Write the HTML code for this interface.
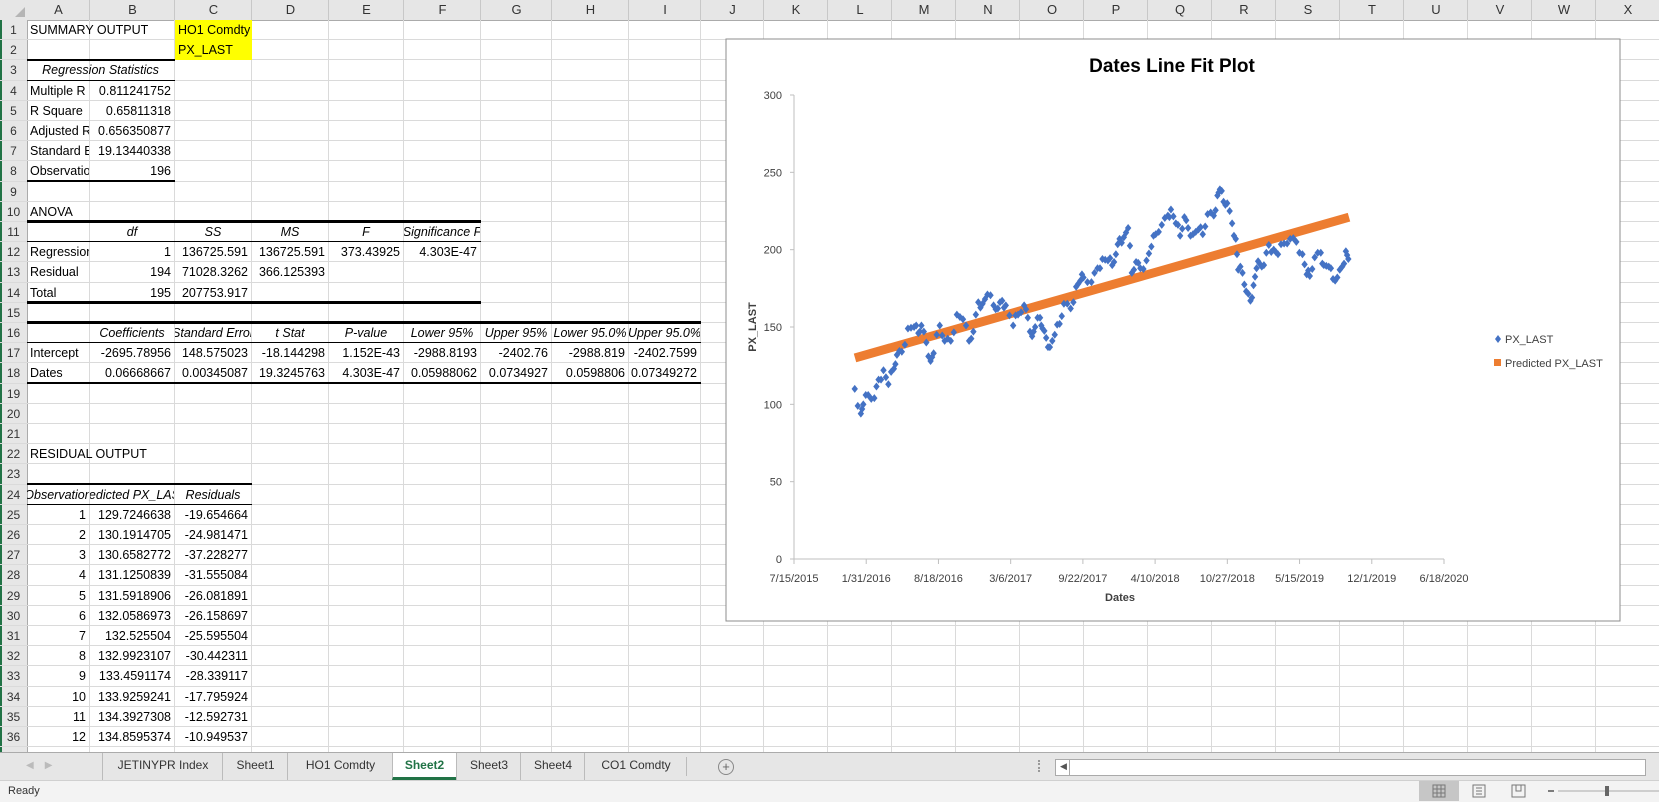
<!DOCTYPE html>
<html><head><meta charset="utf-8"><style>
body{margin:0;width:1659px;height:801px;overflow:hidden;background:#fff;font-family:"Liberation Sans",sans-serif;position:relative}
.a{position:absolute}
.t{position:absolute;font-size:12.5px;line-height:20px;white-space:nowrap;color:#000;overflow:hidden}
.c{display:flex;justify-content:center}
.h{position:absolute;font-size:13px;color:#333;text-align:center;line-height:20px}
</style></head><body>
<div id="g"></div>
<svg class="a" style="left:0;top:0" width="1659" height="801" id="ch"></svg>
<div class="a" style="left:0;top:752px;width:1659px;height:28px;background:#e6e6e6;border-top:1px solid #ababab"></div>
<div class="a" style="left:0;top:780px;width:1659px;height:21px;background:#f3f3f3;border-top:1px solid #d0d0d0"></div>
<div class="t" style="left:8px;top:781px;font-size:11px;color:#333">Ready</div>
<div class="a" style="left:26px;top:760px;font-size:10px;color:#bbb">&#9664;&nbsp;&nbsp;&nbsp;&nbsp;&#9654;</div>
<div id="tabs"></div>
<div class="a" style="left:718px;top:759px;width:14px;height:14px;border:1px solid #888;border-radius:50%;font-size:13px;line-height:14px;text-align:center;color:#666">+</div>
<div class="a" style="left:1038px;top:760px;width:2px;height:12px;border-left:2px dotted #999"></div>
<div class="a" style="left:1055px;top:759px;width:589px;height:15px;background:#fff;border:1px solid #aaa"></div>
<div class="a" style="left:1069px;top:760px;width:1px;height:15px;background:#aaa"></div>
<div class="a" style="left:1060px;top:761px;font-size:9px;color:#555">&#9664;</div>
<div class="a" style="left:1419px;top:781px;width:40px;height:20px;background:#c6c6c6"></div>
<svg class="a" style="left:1419px;top:781px" width="240" height="20">
<g fill="none" stroke="#777" stroke-width="1"><rect x="14" y="4" width="12" height="12"/><path d="M18 4V16M22 4V16M14 8H26M14 12H26"/>
<rect x="54" y="4" width="12" height="12"/><path d="M57 7h6M57 10h6M57 13h6"/>
<rect x="93" y="4" width="13" height="12"/><path d="M97 4v6h5V4"/></g>
<path d="M129 10h6" stroke="#555" stroke-width="1.5"/><path d="M139 10h101" stroke="#aaa"/><rect x="186" y="5" width="4" height="10" fill="#666"/>
</svg>
<script>
const cols=[0,27,90,175,252,329,404,481,552,629,701,764,828,892,956,1020,1084,1148,1212,1276,1340,1404,1468,1532,1596,1660];
const L="ABCDEFGHIJKLMNOPQRSTUVWX";
const rt=i=>20+(i-1)*20.2;
let h='';
h+=`<div class="a" style="left:0;top:0;width:1659px;height:20px;background:#e6e6e6;border-bottom:1px solid #ababab"></div>`;
h+=`<div class="a" style="left:0;top:20px;width:27px;height:732px;background:#e6e6e6;border-right:1px solid #ababab"></div>`;
h+=`<div class="a" style="left:0;top:20px;width:2px;height:732px;background:#217346"></div>`;
h+=`<svg class="a" style="left:14px;top:6px" width="12" height="12"><path d="M11 1V11H1Z" fill="#b5b5b5"/></svg>`;
for(let c=1;c<cols.length-1;c++){
 h+=`<div class="h" style="left:${cols[c]}px;top:0;width:${cols[c+1]-cols[c]}px">${L[c-1]}</div>`;
 h+=`<div class="a" style="left:${cols[c+1]-1}px;top:0;width:1px;height:20px;background:#c8c8c8"></div>`;
 h+=`<div class="a" style="left:${cols[c+1]-1}px;top:20px;width:1px;height:732px;background:#dadada"></div>`;
}
for(let r=1;r<=37;r++){
 let y=rt(r);
 if(r<=36) h+=`<div class="h" style="left:0;top:${y}px;width:27px;font-size:12px">${r}</div>`;
 h+=`<div class="a" style="left:0;top:${y+19.2}px;width:1659px;height:1px;background:#dadada"></div>`;
}
function bl(r,c1,c2,w){
 h+=`<div class="a" style="left:${cols[c1]}px;top:${rt(r)+20.2-w/2-0.5}px;width:${cols[c2+1]-cols[c1]}px;height:${w}px;background:#000"></div>`;}
h+=`<div class="a" style="left:175px;top:20px;width:77px;height:40px;background:#ffff00"></div>`;
bl(2,1,2,2.5);bl(3,1,2,1);bl(8,1,2,2.5);
bl(10,1,6,2.5);bl(11,1,6,1);bl(14,1,6,2.5);
bl(15,1,9,2.5);bl(16,1,9,1);bl(18,1,9,2.5);
bl(23,1,3,2.5);bl(24,1,3,1);
function t(r,c,txt,al,st,span){al=al||'l';let x=cols[c],w=cols[c+(span||1)]-cols[c];
 let s=al=='r'?`text-align:right;padding-right:3px;`:al=='c'?'':'padding-left:3px;';
 let cls=al=='c'?'t c':'t';
 h+=`<div class="${cls}" style="left:${x}px;top:${rt(r)}px;width:${al=='c'?w-1:w-4}px;${s}${st||''}"><span>${txt}</span></div>`;}
t(1,1,'SUMMARY OUTPUT','l','',2);t(1,3,'HO1 Comdty','l','',2);t(2,3,'PX_LAST');
t(3,1,'Regression Statistics','c','font-style:italic',2);
[['Multiple R','0.811241752'],['R Square','0.65811318'],['Adjusted R Square','0.656350877'],['Standard Error','19.13440338'],['Observations','196']].forEach((a,i)=>{t(4+i,1,a[0]);t(4+i,2,a[1],'r')});
t(10,1,'ANOVA','l','',2);
['df','SS','MS','F'].forEach((a,i)=>t(11,2+i,a,'c','font-style:italic'));
t(11,6,'Significance F','c','font-style:italic');
t(12,1,'Regression');t(12,2,'1','r');t(12,3,'136725.591','r');t(12,4,'136725.591','r');t(12,5,'373.43925','r');t(12,6,'4.303E-47','r');
t(13,1,'Residual');t(13,2,'194','r');t(13,3,'71028.3262','r');t(13,4,'366.125393','r');
t(14,1,'Total');t(14,2,'195','r');t(14,3,'207753.917','r');
['Coefficients','Standard Error','t Stat','P-value','Lower 95%','Upper 95%','Lower 95.0%','Upper 95.0%'].forEach((a,i)=>t(16,2+i,a,'c','font-style:italic'));
['Intercept','-2695.78956','148.575023','-18.144298','1.152E-43','-2988.8193','-2402.76','-2988.819','-2402.7599'].forEach((a,i)=>t(17,1+i,a,i?'r':'l'));
['Dates','0.06668667','0.00345087','19.3245763','4.303E-47','0.05988062','0.0734927','0.0598806','0.07349272'].forEach((a,i)=>t(18,1+i,a,i?'r':'l'));
t(22,1,'RESIDUAL OUTPUT','l','',2);
['Observation','Predicted PX_LAST','Residuals'].forEach((a,i)=>t(24,1+i,a,'c','font-style:italic'));
[['129.7246638','-19.654664'],['130.1914705','-24.981471'],['130.6582772','-37.228277'],['131.1250839','-31.555084'],['131.5918906','-26.081891'],['132.0586973','-26.158697'],['132.525504','-25.595504'],['132.9923107','-30.442311'],['133.4591174','-28.339117'],['133.9259241','-17.795924'],['134.3927308','-12.592731'],['134.8595374','-10.949537']].forEach((a,i)=>{t(25+i,1,String(i+1),'r');t(25+i,2,a[0],'r');t(25+i,3,a[1],'r')});
document.getElementById('g').innerHTML=h;
const tb=[['JETINYPR Index',102,222],['Sheet1',222,287],['HO1 Comdty',287,392],['Sheet2',392,456],['Sheet3',456,520],['Sheet4',520,584],['CO1 Comdty',584,686]];
let th='';
tb.forEach(a=>{let act=a[0]=='Sheet2';
 th+=`<div class="a" style="left:${a[1]}px;top:753px;width:${a[2]-a[1]}px;height:27px;${act?'background:#fff;border-bottom:3px solid #217346;box-sizing:border-box;':''}border-left:1px solid #bbb;text-align:center;font-size:12px;line-height:25px;color:${act?'#217346':'#333'};${act?'font-weight:bold':''}">${a[0]}</div>`});
th+=`<div class="a" style="left:686px;top:757px;width:1px;height:19px;background:#bbb"></div>`;
document.getElementById('tabs').innerHTML=th;
const X0=794,X1=1444,Y0=559,K=464/300;
const yv=v=>Y0-v*K;
let s=`<rect x="726" y="39" width="894" height="582" fill="#fff" stroke="#8c8c8c"/>`;
s+=`<text x="1172" y="72" font-size="19" font-weight="bold" text-anchor="middle" font-family="Liberation Sans">Dates Line Fit  Plot</text>`;
s+=`<line x1="${X0}" y1="${yv(300)}" x2="${X0}" y2="${Y0}" stroke="#bfbfbf"/><line x1="${X0}" y1="${Y0}" x2="${X1}" y2="${Y0}" stroke="#bfbfbf"/>`;
for(let v=0;v<=300;v+=50){s+=`<line x1="${X0-4}" x2="${X0}" y1="${yv(v)}" y2="${yv(v)}" stroke="#bfbfbf"/><text x="${X0-12}" y="${yv(v)+4}" font-size="11" text-anchor="end" fill="#404040">${v}</text>`}
const xl=['7/15/2015','1/31/2016','8/18/2016','3/6/2017','9/22/2017','4/10/2018','10/27/2018','5/15/2019','12/1/2019','6/18/2020'];
xl.forEach((l,i)=>{let x=X0+i*(X1-X0)/9;s+=`<line x1="${x}" x2="${x}" y1="${Y0}" y2="${Y0+5}" stroke="#bfbfbf"/><text x="${x}" y="${Y0+23}" font-size="11" text-anchor="middle" fill="#404040">${l}</text>`});
s+=`<text x="1120" y="601" font-size="11" font-weight="bold" text-anchor="middle" fill="#404040">Dates</text>`;
s+=`<text transform="translate(756,327) rotate(-90)" font-size="11" font-weight="bold" text-anchor="middle" fill="#404040">PX_LAST</text>`;
const p=[[253,110],[263,94],[267,100],[275,106],[285,104],[292,116],[300,122],[308,113],[317,123],[322,132],[330,134],[340,149],[350,150],[357,146],[362,151],[370,140],[377,128],[382,133],[392,151],[400,141],[410,141],[420,158],[430,155],[440,141],[447,147],[455,166],[462,165],[470,171],[480,164],[487,162],[494,167],[500,164],[512,151],[520,158],[530,164],[536,156],[543,144],[548,150],[556,156],[560,149],[566,143],[572,137],[580,145],[588,152],[595,165],[606,162],[615,176],[622,180],[627,182],[640,179],[650,188],[658,194],[667,193],[674,190],[680,197],[686,207],[693,208],[700,214],[706,185],[713,192],[720,188],[730,193],[738,202],[745,210],[755,216],[765,222],[770,226],[778,217],[785,209],[792,221],[798,214],[806,210],[815,213],[822,210],[830,223],[840,222],[846,235],[850,239],[856,231],[862,230],[870,217],[876,207],[880,187],[887,185],[893,173],[900,167],[905,177],[910,188],[915,191],[922,190],[930,203],[938,200],[945,197],[955,204],[965,207],[975,205],[985,197],[992,184],[997,183],[1005,195],[1015,198],[1020,190],[1028,189],[1035,181],[1042,182],[1050,189],[1056,199],[1060,194]];
s+=`<line x1="855" y1="${yv(130)}" x2="1349" y2="${yv(221)}" stroke="#ed7d31" stroke-width="9"/>`;
let pts=[];
for(let i=0;i<p.length;i++){pts.push(p[i]);if(i<p.length-1){let a=p[i],b=p[i+1];pts.push([(a[0]+b[0])/2,(a[1]+b[1])/2+((i*7)%5-2)*1.5])}}
pts.forEach(q=>{let x=700+q[0]/1.635,y=yv(q[1]);s+=`<path d="M${x} ${y-4}L${x+3.2} ${y}L${x} ${y+4}L${x-3.2} ${y}Z" fill="#4472c4"/>`});
s+=`<path d="M1498 335l3 4-3 4-3-4z" fill="#4472c4"/><text x="1505" y="343" font-size="11" fill="#404040">PX_LAST</text>`;
s+=`<rect x="1494" y="359" width="7" height="7" fill="#ed7d31"/><text x="1505" y="367" font-size="11" fill="#404040">Predicted PX_LAST</text>`;
document.getElementById('ch').innerHTML=s;
</script>
</body></html>
